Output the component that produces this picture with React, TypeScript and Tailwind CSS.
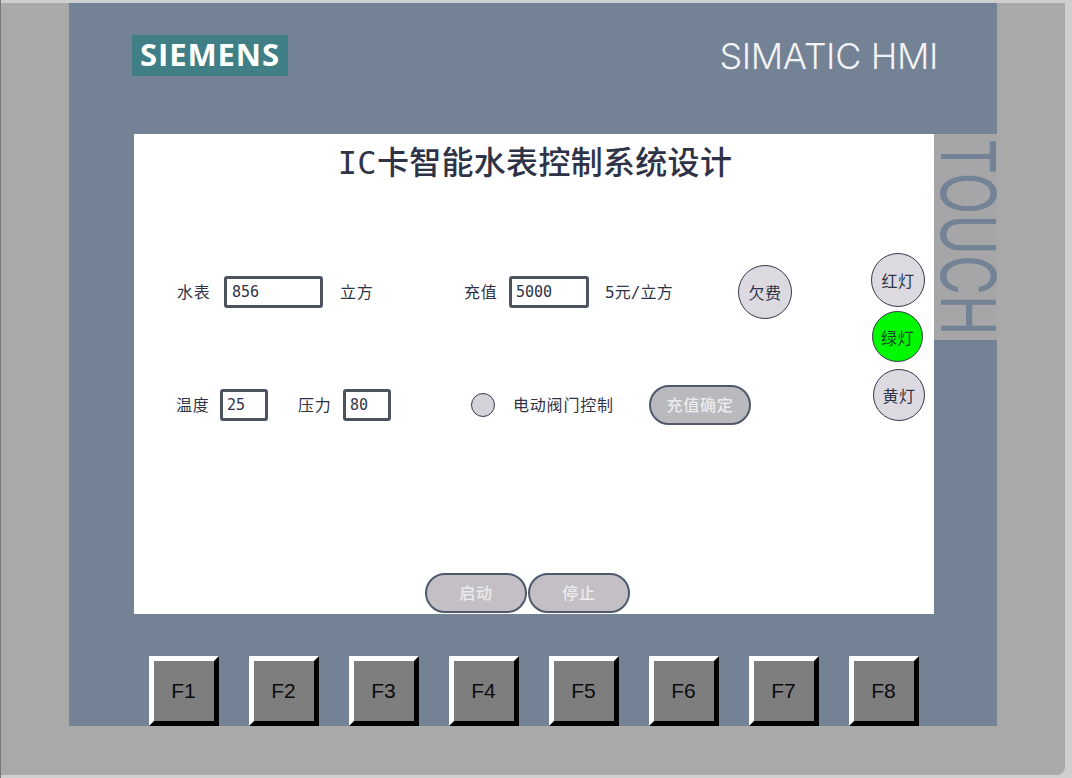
const cjk = "font-['Noto_Sans_CJK_SC',sans-serif]";
const mono = "font-['DejaVu_Sans_Mono','Noto_Sans_CJK_SC',monospace]";

function Label({ children, className = "" }: { children: React.ReactNode; className?: string }) {
  return (
    <span className={`${mono} relative top-px shrink-0 text-[16px] leading-5 text-[#2f3347] whitespace-nowrap ${className}`}>
      {children}
    </span>
  );
}

function Field({ value, className = "" }: { value: string; className?: string }) {
  return (
    <div className={`${mono} flex h-[32px] shrink-0 items-center rounded-[3px] border-[3px] border-[#4d525f] bg-white pt-px pl-[4px] text-[15px] text-[#2f3347] ${className}`}>
      {value}
    </div>
  );
}

function Round({ label, className = "" }: { label: string; className?: string }) {
  return (
    <div className={`${cjk} flex shrink-0 items-center justify-center rounded-full border-[1.5px] border-[#34384a] text-[16px] tracking-[0.5px] ${className}`}>
      {label}
    </div>
  );
}

function Pill({ label, className = "" }: { label: string; className?: string }) {
  return (
    <div className={`${cjk} flex h-[40px] w-[102px] shrink-0 items-center justify-center rounded-[20px] border-2 border-[#4e5a6c] pb-[2px] text-[16px] font-medium tracking-[0.8px] text-[#ecebee] ${className}`}>
      {label}
    </div>
  );
}

export default function App() {
  return (
    <div className="h-[778px] w-[1072px] overflow-hidden border-l border-[#77777a] bg-[#cfcfcf] pt-[3px] pb-[3px] pr-[7px]">
      <div className="flex h-[772px] w-full justify-start rounded-br-[8px] bg-[#a9a9aa] pl-[68px] pb-[49px]">
        <div className="flex w-[928px] flex-col bg-[#748295]">
          {/* header */}
          <div className="flex h-[131px] shrink-0 items-start justify-between pl-[63px] pr-[59px] pt-[32px]">
            <div className="flex h-[41px] w-[156px] items-center justify-center bg-[#3f7f85] pb-[2px] font-['Open_Sans',sans-serif] text-[31px] font-bold tracking-[0.9px] text-white">
              SIEMENS
            </div>
            <div className="mt-[-1px] font-['Inter',sans-serif] text-[36px] leading-[44px] font-light tracking-[-0.4px] whitespace-nowrap text-[#f2f3f5]">
              SIMATIC HMI
            </div>
          </div>

          {/* screen + side label */}
          <div className="flex h-[480px] shrink-0 pl-[65px]">
            <div className="flex h-[480px] w-[800px] shrink-0 flex-col bg-white">
              <div className={`${mono} flex h-[58px] w-[802px] shrink-0 items-center justify-center text-[32px] font-medium tracking-[0.3px] whitespace-nowrap text-[#2f3347]`}>
                IC卡智能水表控制系统设计
              </div>
              <div className="flex flex-1">
                <div className="flex w-[730px] shrink-0 flex-col">
                  <div className="mt-[73px] flex items-center pl-[43px]">
                    <Label className="w-[47px] tracking-[0.8px]">水表</Label>
                    <Field value="856" className="w-[99px] pl-[5px]" />
                    <Label className="ml-[17px] w-[124px] tracking-[0.8px]">立方</Label>
                    <Label className="w-[45px] tracking-[0.8px]">充值</Label>
                    <Field value="5000" className="w-[80px]" />
                    <Label className="ml-[16px] w-[133px] tracking-[0.1px]">5元/立方</Label>
                    <Round label="欠费" className="h-[54px] w-[54px] bg-[#dcdae0] text-[#2f3347]" />
                  </div>
                  <div className="mt-[66px] flex items-center pl-[42px]">
                    <Label className="w-[44px] tracking-[0.8px]">温度</Label>
                    <Field value="25" className="w-[48px]" />
                    <Label className="ml-[30px] w-[45px] tracking-[0.8px]">压力</Label>
                    <Field value="80" className="w-[48px]" />
                    <div className="ml-[80px] h-[24px] w-[24px] shrink-0 rounded-full border-[1.5px] border-[#34384a] bg-[#d4d3d9]" />
                    <Label className="ml-[18px] w-[136px] tracking-[0.8px]">电动阀门控制</Label>
                    <Pill label="充值确定" className="bg-[#bab9bd]" />
                  </div>
                  <div className="mt-auto mb-px flex gap-px pl-[291px]">
                    <Pill label="启动" className="bg-[#c3bfc5]" />
                    <Pill label="停止" className="bg-[#c3bfc5]" />
                  </div>
                </div>
                <div className="flex flex-1 flex-col gap-[4px] pt-[61px] pl-[7px]">
                  <Round label="红灯" className="h-[54px] w-[54px] bg-[#dcdae0] text-[#2f3347]" />
                  <Round label="绿灯" className="ml-px h-[51px] w-[51px] bg-[#00f800] text-[#0f4a2a]" />
                  <Round label="黄灯" className="mt-[3px] ml-[2px] h-[52px] w-[52px] bg-[#dcdae0] text-[#2f3347]" />
                </div>
              </div>
            </div>
            <div className="flex h-[206px] w-[63px] shrink-0 justify-end overflow-hidden bg-[#a6a6a8]">
              <span className="mt-[-28px] mr-[-11px] origin-center scale-y-[0.72] font-['Inter',sans-serif] text-[76px] leading-[78px] font-normal whitespace-nowrap text-[#748295] [writing-mode:vertical-rl]">
                TOUCH
              </span>
            </div>
          </div>

          {/* function keys */}
          <div className="flex flex-1 items-end gap-[30px] pl-[80px]">
            {["F1", "F2", "F3", "F4", "F5", "F6", "F7", "F8"].map((k) => (
              <div
                key={k}
                className="flex h-[70px] w-[70px] items-center justify-center border-[5px] border-t-white border-r-black border-b-black border-l-white bg-[#7f7e7e] pr-px font-['Liberation_Sans',sans-serif] text-[21px] text-[#0c0c10]"
              >
                {k}
              </div>
            ))}
          </div>
        </div>
      </div>
    </div>
  );
}
